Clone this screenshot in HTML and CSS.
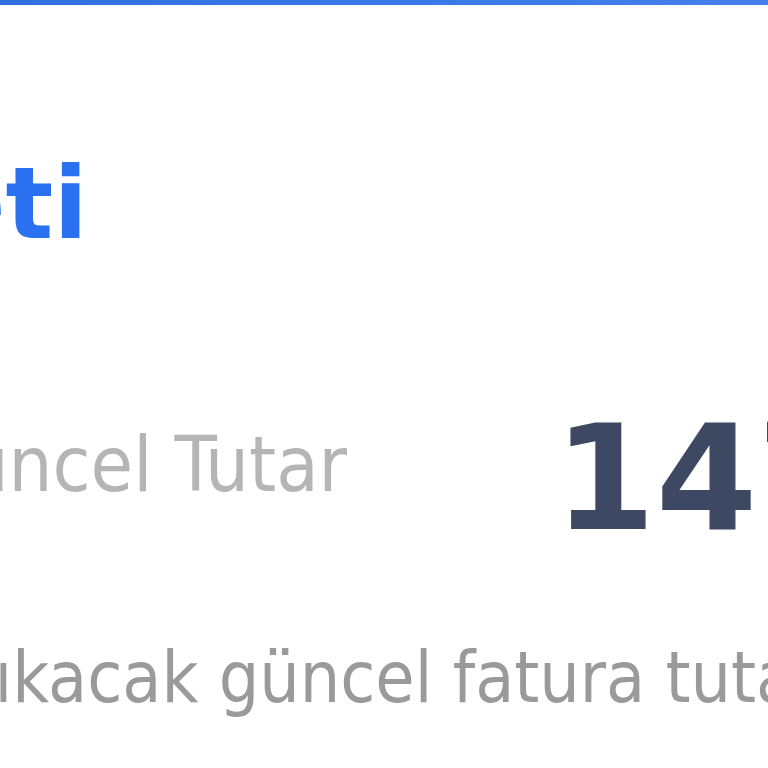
FILE: index.html
```html
<!DOCTYPE html>
<html lang="tr">
<head>
<meta charset="utf-8">
<title>Fatura Özeti</title>
<link rel="stylesheet" href="styles.css">
</head>
<body>
<div class="card">
  <div class="topbar"></div>
  <div class="body">
    <h1 class="title">Fatura Özeti</h1>
    <div class="row">
      <span class="label">Güncel Tutar</span>
      <span class="value">147,50 TL</span>
    </div>
    <p class="desc">Dönem sonunda çıkacak güncel fatura tutarıdır.</p>
  </div>
</div>
</body>
</html>
```
FILE: styles.css
```css
html, body {
  margin: 0;
  padding: 0;
  background: #ffffff;
  overflow: hidden;
}
body {
  width: 768px;
  height: 768px;
  font-family: "DejaVu Sans", sans-serif;
}
.card {
  width: 2000px;
}
.topbar {
  height: 5px;
  background: linear-gradient(90deg, #2f6fe0, #4a86f0 50%, #2f6fe0);
}
.body {
  display: flex;
  flex-direction: column;
}
.title {
  margin: 0;
  margin-top: 139px;
  font-size: 100px;
  font-weight: bold;
  line-height: 120px;
  color: #2a70f0;
  white-space: nowrap;
  text-indent: -606px;
}
.row {
  display: flex;
  align-items: flex-start;
  margin-top: 141px;
  gap: 207px;
  white-space: nowrap;
}
.label {
  font-family: "DejaVu Sans Condensed", "DejaVu Sans", sans-serif;
  font-stretch: condensed;
  font-size: 77px;
  line-height: 1;
  color: #b5b5b5;
  margin-left: -89px;
  margin-top: 21px;
}
.value {
  font-size: 146px;
  font-weight: bold;
  color: #3d4963;
  line-height: 1;
}
.desc {
  margin: 0;
  margin-top: 85px;
  font-family: "DejaVu Sans Condensed", "DejaVu Sans", sans-serif;
  font-stretch: condensed;
  font-size: 71px;
  color: #9a9a9a;
  white-space: nowrap;
  text-indent: -585px;
}
```
